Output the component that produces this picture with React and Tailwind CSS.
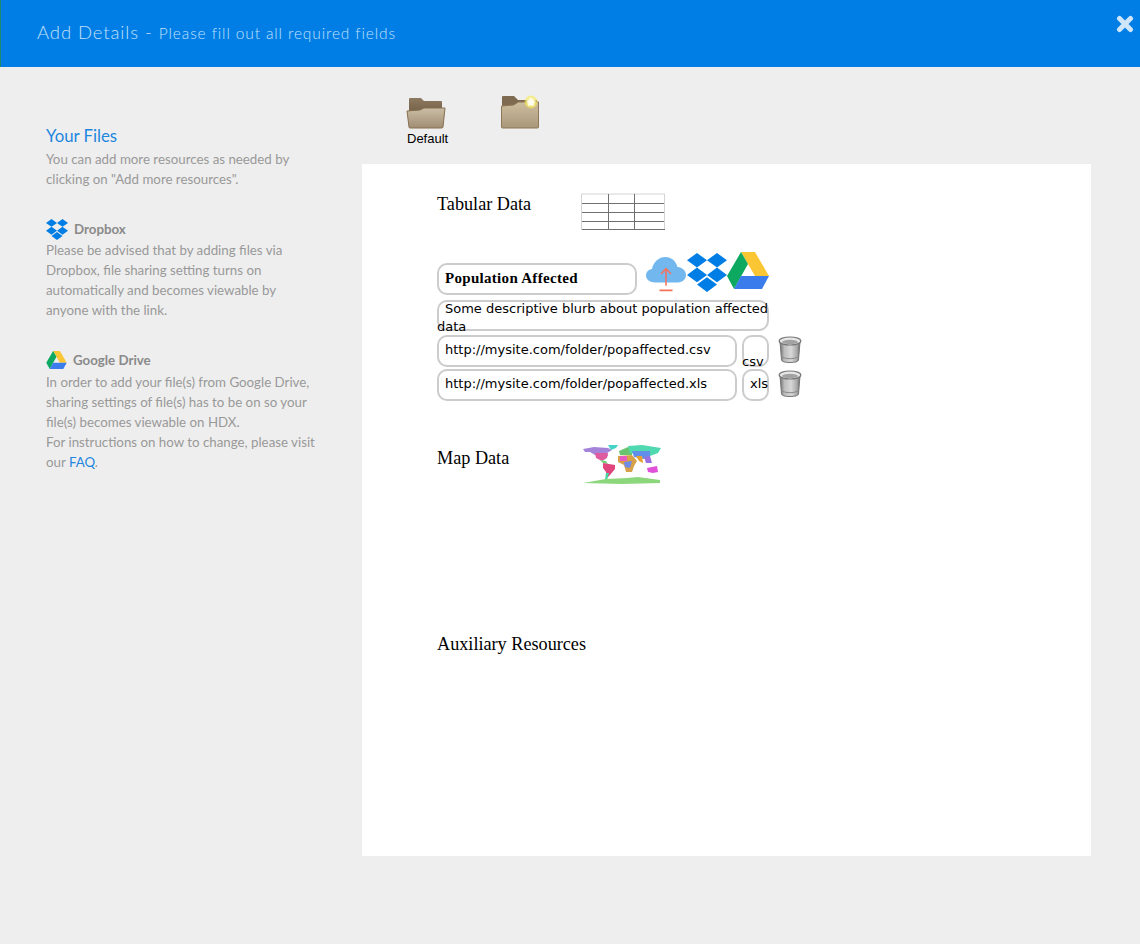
import React from "react";

const DropboxIcon = ({ className }) => (
  <svg viewBox="0 .8 24 20.4" preserveAspectRatio="none" className={className} fill="#007ee5">
    <path d="M6 .8 0 4.600l6 3.800 6-3.800L6 .8zM18 .8l-6 3.800 6 3.800 6-3.800L18 .8zM0 12.300l6 3.800 6-3.800-6-3.900-6 3.900zM18 8.400l-6 3.900 6 3.800 6-3.800-6-3.900zM6 17.300l6 3.900 6-3.900-6-3.800-6 3.800z" />
  </svg>
);

const DriveIcon = ({ className }) => (
  <svg viewBox="0 0 42 37" className={className}>
    <polygon points="14,0 28,0 42,24 28,24" fill="#fbc633" />
    <polygon points="14,0 21,12 7,37 0,24" fill="#0da960" />
    <polygon points="14,24 42,24 35,37 7,37" fill="#3b7cec" />
  </svg>
);

const CloudUpload = ({ className }) => (
  <svg viewBox="0 0 40 34" preserveAspectRatio="none" className={className} fill="none">
    <path d="M9 25C4 25 0 22.500 0 18.500 0 15 2.700 12.600 6 12.200 7.500 5.500 13 1 19.500 1 25.500 1 30 5 31.500 10.500 36.500 11 40 14 40 18c0 4-3.500 7-8 7H9z" fill="#72b7ee" />
    <path d="M20 28V12M15 17l5-5 5 5M13.500 32.500h13" stroke="#f7705a" strokeWidth="1.500" />
  </svg>
);

const FolderOpen = () => (
  <svg viewBox="0 0 40 34" className="h-[34px] w-[40px]">
    <defs>
      <linearGradient id="backA" x1="0" y1="0" x2="0" y2="1">
        <stop offset="0" stopColor="#8d7a60" />
        <stop offset="1" stopColor="#6d5a42" />
      </linearGradient>
      <linearGradient id="frontA" x1="0" y1="0" x2="0" y2="1">
        <stop offset="0" stopColor="#cbbda6" />
        <stop offset="1" stopColor="#a08e74" />
      </linearGradient>
    </defs>
    <path d="M3 3q0-1 1-1h11l3 3h17q1 0 1 1v14H3z" fill="url(#backA)" />
    <path d="M1 15l13-1 4-2h21l-2 19q0 1-2 1H4q-1 0-1-1z" fill="url(#frontA)" stroke="#86704f" strokeWidth="1" />
  </svg>
);

const FolderNew = () => (
  <svg viewBox="0 0 38 34" className="h-[34px] w-[38px]">
    <defs>
      <linearGradient id="frontB" x1="0" y1="0" x2="0" y2="1">
        <stop offset="0" stopColor="#cdbd9f" />
        <stop offset="1" stopColor="#a9977a" />
      </linearGradient>
      <radialGradient id="glow">
        <stop offset="0.35" stopColor="#fffbd0" />
        <stop offset="1" stopColor="#f5e430" stopOpacity="0.5" />
      </radialGradient>
    </defs>
    <path d="M1 2q0-1 1-1h11l4 4h19v10H1z" fill="#7d6a50" />
    <path d="M.5 11l12-1 5-3h20v25q0 1-1 1H1.500q-1 0-1-1z" fill="url(#frontB)" stroke="#8d7757" strokeWidth="1" />
    <circle cx="30" cy="7" r="6.500" fill="url(#glow)" />
    <polygon points="30,2.500 31.500,5.500 34.500,6 32.300,8.200 33,11.300 30,9.800 27,11.300 27.700,8.200 25.500,6 28.500,5.500" fill="#fffdf0" />
  </svg>
);

const Trash = () => (
  <svg viewBox="0 0 24 27" className="h-[27px] w-[24px]">
    <defs>
      <linearGradient id="can" x1="0" y1="0" x2="1" y2="0">
        <stop offset="0" stopColor="#6f6f6f" />
        <stop offset="0.22" stopColor="#bcbcbc" />
        <stop offset="0.55" stopColor="#d8d8d8" />
        <stop offset="0.85" stopColor="#a8a8a8" />
        <stop offset="1" stopColor="#666666" />
      </linearGradient>
    </defs>
    <path d="M2 6l1.500 18q.5 2.500 8.500 2.500t8.500-2.500l1.500-18z" fill="url(#can)" stroke="#777777" strokeWidth="1" />
    <path d="M3.500 21q8.500 3.500 17 0" stroke="#8a8a8a" strokeWidth="1" fill="none" />
    <ellipse cx="12" cy="5" rx="10.800" ry="4" fill="#e8e8e8" stroke="#777777" strokeWidth="1.200" />
    <ellipse cx="12" cy="6" rx="8" ry="2.200" fill="#a2a2a2" />
  </svg>
);

const TableIcon = () => (
  <svg viewBox="0 0 84 38" className="h-[38px] w-[84px]" fill="none">
    <path d="M.5 1H83.500V37M.5 1V37" stroke="#d4d4d4" strokeWidth="1" />
    <path d="M1 10.500H83M1 19.500H83M1 28.500H83M1 36.500H84M27.500 1V37M53.500 1V37" stroke="#707070" strokeWidth="1" />
  </svg>
);

const WorldMap = () => (
  <svg viewBox="0 0 80 40" className="h-[40px] w-[80px]">
    <polygon points="1,5 12,3 26,4 30,6 25,9 26,12 20,15 13,11 8,8 3,8" fill="#a583d8" />
    <polygon points="26,1 36,1 34,4 29,6" fill="#45d3c7" />
    <polygon points="13,9 26,9 25,14 20,17 14,14" fill="#e05ca0" />
    <polygon points="18,16 24,17 26,20 21,19" fill="#6fd07a" />
    <polygon points="21,19 33,21 33,25 28,31 25,34 24,28 21,24" fill="#e0457e" />
    <polygon points="24,29 27,29 25,36 23,36" fill="#45d3a0" />
    <polygon points="37,7 46,3 50,6 50,11 38,11" fill="#6ac46f" />
    <polygon points="36,12 50,11 55,17 52,22 50,28 44,28 42,21 36,18" fill="#d9a04a" />
    <polygon points="38,12 45,12 45,17 38,17" fill="#e85bc0" />
    <polygon points="42,18 50,17 48,24 43,23" fill="#6f8ce8" />
    <polygon points="46,2 60,1 79,4 76,9 68,12 58,11 48,9" fill="#50d8b0" />
    <polygon points="50,7 68,7 68,14 62,15 52,13" fill="#5f8fe8" />
    <polygon points="54,12 60,12 61,19 57,17" fill="#e8a030" />
    <polygon points="62,13 68,12 70,19 64,19" fill="#9a6fe0" />
    <polygon points="65,24 75,22 76,28 71,29 66,28" fill="#e050d8" />
    <polygon points="1,39 24,35 45,34 56,33 78,36 78,39 40,40" fill="#8cd67c" />
  </svg>
);

function Pill({ className, children }) {
  return (
    <div className={`rounded-[10px] border-2 border-[#cccccc] bg-white text-[13px] leading-[16px] text-black ${className}`}>
      {children}
    </div>
  );
}

function UrlRow({ url, type, typeClass, className }) {
  return (
    <div className={`flex items-start ${className}`}>
      <Pill className="h-[32px] w-[300px] pl-[6px] pt-[5px]">{url}</Pill>
      <Pill className={`ml-[5px] h-[32px] w-[27px] ${typeClass}`}>{type}</Pill>
      <div className="ml-[9px] mt-[1px]"><Trash /></div>
    </div>
  );
}

function ResourceHeading({ title, icon, className, iconClass }) {
  return (
    <div className={`flex items-start font-['Liberation_Serif',serif] text-[18.200px] leading-[22px] text-black ${className}`}>
      <div className={iconClass}>{title}</div>
      {icon}
    </div>
  );
}

export default function App() {
  return (
    <div className="min-h-[944px] bg-[#eeeeee]">
      <header className="flex h-[67px] items-start justify-between border-l border-[#1f8a70] bg-[#007ee5] pl-[36px] pr-[6px]">
        <div className="flex items-baseline pt-[21px] font-['Lato',sans-serif] font-light text-[#c2e0f9]">
          <span className="text-[18.500px] leading-[22px] tracking-[0.9px]">Add Details -</span>
          <span className="ml-[6px] text-[15.500px] leading-[22px] tracking-[0.87px]">Please fill out all required fields</span>
        </div>
        <svg viewBox="0 0 18 18" className="mt-[15px] h-[18px] w-[18px]">
          <path d="M3.500 3.500l11 11M14.500 3.500l-11 11" stroke="#cfe6fa" strokeWidth="5" strokeLinecap="round" />
        </svg>
      </header>

      <div className="flex">
        <aside className="w-[362px] whitespace-nowrap pl-[46px] pt-[58px] font-['Lato',sans-serif] text-[13.300px] leading-[20px] text-[#999999]">
          <h2 className="text-[16.800px] leading-[22px] text-[#1d87e0]">Your Files</h2>
          <p className="mt-[2px]">
            You can add more resources as needed by
            <br />
            clicking on "Add more resources".
          </p>

          <div className="mt-[29px] flex h-[22px] items-center gap-[6px] font-bold text-[#8a8a8a]">
            <DropboxIcon className="h-[21px] w-[22px]" />
            Dropbox
          </div>
          <p>
            Please be advised that by adding files via
            <br />
            Dropbox, file sharing setting turns on
            <br />
            automatically and becomes viewable by
            <br />
            anyone with the link.
          </p>

          <div className="mt-[30px] flex h-[20px] items-center gap-[6px] font-bold text-[#8a8a8a]">
            <DriveIcon className="h-[18px] w-[21px]" />
            Google Drive
          </div>
          <p className="mt-[2px]">
            In order to add your file(s) from Google Drive,
            <br />
            sharing settings of file(s) has to be on so your
            <br />
            file(s) becomes viewable on HDX.
            <br />
            For instructions on how to change, please visit
            <br />
            our <span className="text-[#1d87e0]">FAQ</span>.
          </p>
        </aside>

        <main className="w-[729px]">
          <div className="flex h-[97px] items-start pl-[45px] pt-[29px]">
            <div className="flex w-[94px] flex-col items-start">
              <div className="-ml-[1px]"><FolderOpen /></div>
              <span className="mt-[1px] font-['Liberation_Sans',sans-serif] text-[13px] leading-[15px] text-black">Default</span>
            </div>
            <div className="-mt-[1px]"><FolderNew /></div>
          </div>

          <section className="h-[692px] bg-white pl-[75px] font-['DejaVu_Sans',sans-serif]">
            <ResourceHeading title="Tabular Data" icon={<TableIcon />} iconClass="w-[144px]" className="pt-[29px]" />

            <div className="mt-[20px] flex items-start">
              <Pill className="mt-[12px] h-[32px] w-[200px] pl-[6px] pt-[5px] font-['Liberation_Serif',serif] text-[15px] font-bold tracking-[0.3px]">
                Population Affected
              </Pill>
              <div className="ml-[9px] mt-[5px]"><CloudUpload className="h-[36px] w-[40px]" /></div>
              <DropboxIcon className="ml-[1px] mt-[2px] h-[39px] w-[40px]" />
              <DriveIcon className="mt-[1px] h-[37px] w-[42px]" />
            </div>

            <Pill className="mt-[5px] h-[31px] w-[332px]">
              <div className="-ml-[2px] -mt-[2px] whitespace-nowrap leading-[18px]">
                <span className="ml-[8px]">Some descriptive blurb about population affected</span>
                <br />
                data
              </div>
            </Pill>

            <UrlRow className="mt-[4px]" url="http://mysite.com/folder/popaffected.csv" type={<div className="-ml-[2px] pt-[17px]">csv</div>} />
            <UrlRow className="mt-[2px]" url="http://mysite.com/folder/popaffected.xls" type="xls" typeClass="pl-[6px] pt-[5px]" />

            <ResourceHeading title="Map Data" icon={<div className="-mt-[3px]"><WorldMap /></div>} iconClass="w-[145px]" className="mt-[46px]" />

            <div className="mt-[149px] font-['Liberation_Serif',serif] text-[18.200px] leading-[22px] text-black">Auxiliary Resources</div>
          </section>
        </main>
      </div>
    </div>
  );
}
